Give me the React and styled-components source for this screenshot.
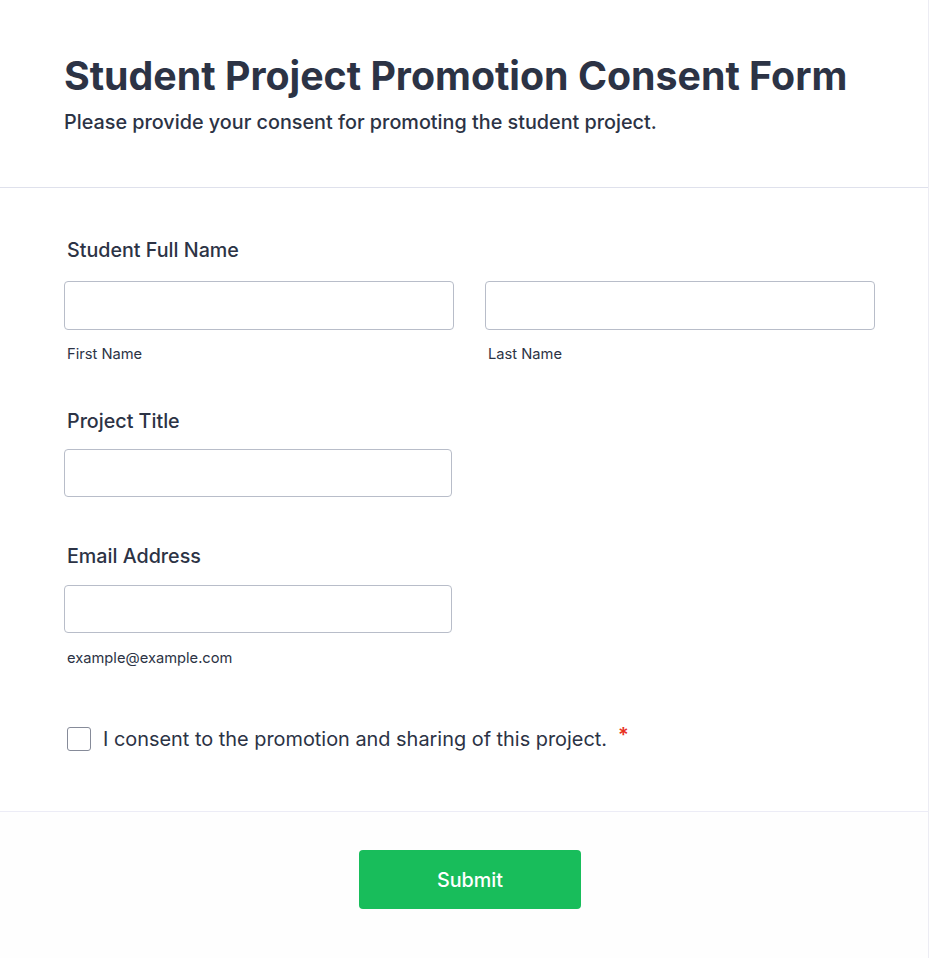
import React from 'react';
import styled, { createGlobalStyle } from 'styled-components';

const GlobalStyle = createGlobalStyle`
  body {
    margin: 0;
    background: #ffffff;
    font-family: Inter, 'Noto Sans', sans-serif;
    color: #2c3345;
  }
  * { box-sizing: border-box; }
`

const Page = styled.div`
  width: 929px;
  min-height: 958px;
  border-right: 1px solid #ececf3;
  background: #ffffff;
  display: flex;
  flex-direction: column;
`

const Header = styled.header`
  padding: 50px 64px 0 64px;
  height: 188px;
  border-bottom: 1px solid #dfe1ec;
`

const Title = styled.h1`
  margin: 0;
  font-size: 39.3px;
  line-height: 52px;
  font-weight: 700;
  color: #2c3345;
`

const Subtitle = styled.p`
  margin: 8px 0 0 0;
  font-size: 19.8px;
  line-height: 24px;
  font-weight: 500;
  color: #2c3345;
`

const Body = styled.main`
  padding: 51px 54px 60px 64px;
  display: flex;
  flex-direction: column;
`

const Field = styled.div`
  display: flex;
  flex-direction: column;
  margin-top: ${p => p.$top || 0}px;
`

const Label = styled.label`
  font-size: 19.7px;
  line-height: 22px;
  font-weight: 500;
  margin-left: 3px;
  margin-bottom: ${p => p.$gap || 17}px;
  color: #2c3345;
`

const Row = styled.div`
  display: grid;
  grid-template-columns: 390px 390px;
  column-gap: 31px;
`

const InputWrap = styled.div`
  display: flex;
  flex-direction: column;
`

const Input = styled.input`
  width: ${p => p.$width || 390}px;
  height: ${p => p.$height || 49}px;
  border: 1px solid #b8bdc9;
  border-radius: 4px;
  background: #ffffff;
  padding: 0 12px;
  font-family: inherit;
  font-size: 16px;
  outline: none;
`

const SubLabel = styled.span`
  margin-top: ${p => p.$top || 16}px;
  margin-left: 3px;
  font-size: 14.7px;
  line-height: 16px;
  color: #2c3345;
`

const ConsentRow = styled.label`
  margin-top: 61px;
  margin-left: 3px;
  display: flex;
  align-items: center;
  gap: 12px;
  font-size: 19.9px;
  line-height: 24px;
  color: #2c3345;
`

const Box = styled.span`
  width: 24px;
  height: 24px;
  border: 1px solid #868b99;
  border-radius: 3px;
  background: #ffffff;
  flex-shrink: 0;
`

const Required = styled.span`
  color: #e8321e;
  font-weight: 600;
  margin-left: -1px;
  align-self: flex-start;
  margin-top: -4px;
`

const Footer = styled.footer`
  border-top: 1px solid #ececf6;
  background: #fefefe;
  padding: 38px 0 50px 12px;
  display: flex;
  justify-content: center;
  flex: 1;
`

const SubmitButton = styled.button`
  width: 222px;
  height: 59px;
  border: none;
  border-radius: 4px;
  background: #18bd5b;
  color: #ffffff;
  font-family: inherit;
  font-size: 19.8px;
  font-weight: 500;
  cursor: pointer;
`

export default function App() {
  return (
    <>
      <GlobalStyle />
      <Page>
        <Header>
          <Title>Student Project Promotion Consent Form</Title>
          <Subtitle>Please provide your consent for promoting the student project.</Subtitle>
        </Header>
        <Body>
          <Field>
            <Label $gap={20}>Student Full Name</Label>
            <Row>
              <InputWrap>
                <Input type="text" />
                <SubLabel>First Name</SubLabel>
              </InputWrap>
              <InputWrap>
                <Input type="text" />
                <SubLabel>Last Name</SubLabel>
              </InputWrap>
            </Row>
          </Field>
          <Field $top={48}>
            <Label>Project Title</Label>
            <Input type="text" $width={388} $height={48} />
          </Field>
          <Field $top={48}>
            <Label $gap={18}>Email Address</Label>
            <Input type="email" $width={388} $height={48} />
            <SubLabel $top={17}>example@example.com</SubLabel>
          </Field>
          <ConsentRow>
            <Box />
            <span>I consent to the promotion and sharing of this project.</span>
            <Required>*</Required>
          </ConsentRow>
        </Body>
        <Footer>
          <SubmitButton>Submit</SubmitButton>
        </Footer>
      </Page>
    </>
  );
}
